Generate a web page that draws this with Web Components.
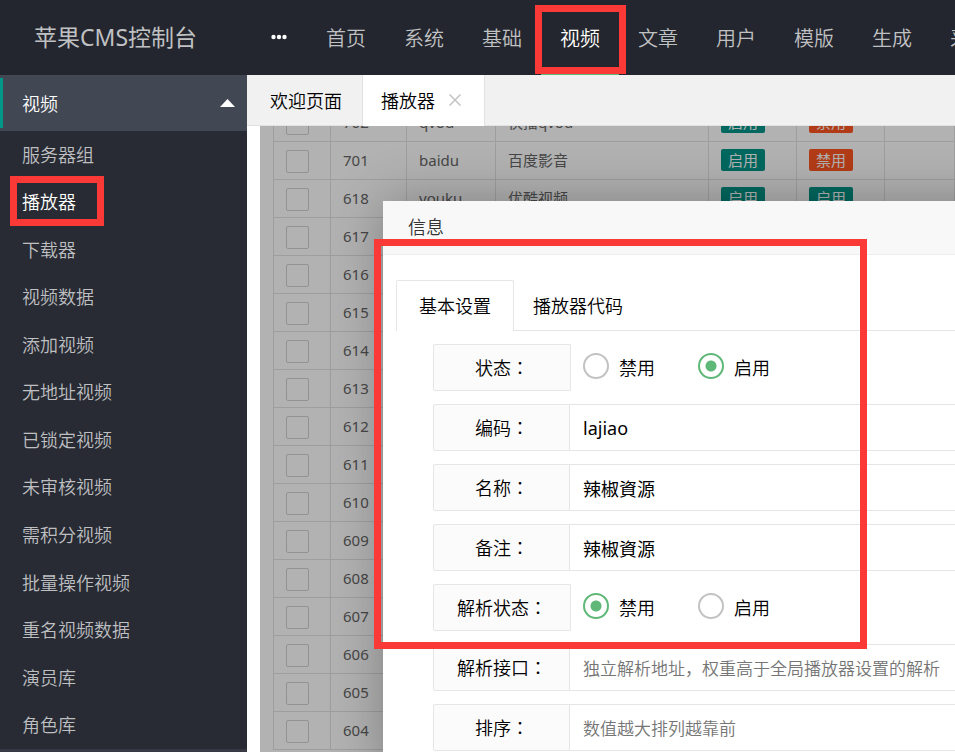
<!DOCTYPE html>
<html lang="zh-CN">
<head>
<meta charset="utf-8">
<meta name="viewport" content="width=device-width, initial-scale=1">
<title>苹果CMS控制台</title>
<style>
	body {
		margin: 0;
		font-family: 'Noto Sans', 'Noto Sans CJK SC', sans-serif;
		font-size: 18px;
		font-weight: 350;
		color: #000;
	}
</style>
</head>
<body>
<cms-app></cms-app>

<script>
class CmsHeader extends HTMLElement {
	constructor() {
		super()
		this.attachShadow({ mode: 'open' })
	}

	static get styles() {
		return /* css */ `
    :host {
      display: flex;
      flex: none;
      height: 75px;
      overflow: hidden;
      background: #23262e;
      color: #c0c1c3;
      white-space: nowrap;
    }
    .logo {
      flex: none;
      box-sizing: border-box;
      width: 247px;
      padding-left: 34px;
      font-size: 23px;
      font-weight: 400;
      line-height: 75px;
    }
    button {
      flex: none;
      display: flex;
      align-items: center;
      width: 60px;
      padding: 0 0 2px 24px;
      border: 0;
      background: none;
    }
    nav { display: flex; }
    a {
      box-sizing: border-box;
      height: 75px;
      padding: 0 19px;
      font-size: 20px;
      line-height: 77px;
      color: inherit;
      text-decoration: none;
    }
    a.active {
      color: #fff;
      border-bottom: 5px solid #5fb878;
    }
    `
	}

	connectedCallback() {
		const items = ['首页', '系统', '基础', '视频', '文章', '用户', '模版', '生成', '采集']
		this.shadowRoot.innerHTML = /* html */ `
      <style>${CmsHeader.styles}</style>
      <div class="logo">苹果CMS控制台</div>
      <button type="button" aria-label="菜单">
        <svg width="16" height="6" viewBox="0 0 16 6" fill="#fff">
          <circle cx="2.5" cy="3" r="2.2"/><circle cx="8" cy="3" r="2.2"/><circle cx="13.5" cy="3" r="2.2"/>
        </svg>
      </button>
      <nav>${items.map(t => `<a href="#"${t === '视频' ? ' class="active"' : ''}>${t}</a>`).join('')}</nav>
    `
	}
}

class CmsSide extends HTMLElement {
	constructor() {
		super()
		this.attachShadow({ mode: 'open' })
	}

	static get styles() {
		return /* css */ `
    :host {
      display: flex;
      flex-direction: column;
      flex: none;
      box-sizing: border-box;
      width: 247px;
      background: #282b33;
      border-bottom: 3px solid #373945;
      color: #bebfc1;
    }
    .group {
      position: relative;
      display: flex;
      align-items: center;
      justify-content: space-between;
      flex: none;
      height: 56px;
      padding: 0 12px 0 22px;
      border: 0;
      background: #424754;
      color: #fff;
      font: inherit;
    }
    .group::before {
      content: '';
      position: absolute;
      left: 0;
      top: 3px;
      bottom: 3px;
      width: 3px;
      background: #009688;
    }
    nav {
      display: flex;
      flex-direction: column;
      flex: 1;
    }
    a {
      display: flex;
      align-items: center;
      flex: 1;
      padding: 0 0 2px 22px;
      color: inherit;
      text-decoration: none;
    }
    a.active { color: #fff; }
    `
	}

	connectedCallback() {
		const items = ['服务器组', '播放器', '下载器', '视频数据', '添加视频', '无地址视频', '已锁定视频',
			'未审核视频', '需积分视频', '批量操作视频', '重名视频数据', '演员库', '角色库']
		this.shadowRoot.innerHTML = /* html */ `
      <style>${CmsSide.styles}</style>
      <button type="button" class="group">视频
        <svg width="15" height="8" viewBox="0 0 15 8"><path d="M7.5 0L15 8H0Z" fill="#fff"/></svg>
      </button>
      <nav>${items.map(t => `<a href="#"${t === '播放器' ? ' class="active"' : ''}>${t}</a>`).join('')}</nav>
    `
	}
}

class CmsTabs extends HTMLElement {
	constructor() {
		super()
		this.attachShadow({ mode: 'open' })
	}

	static get styles() {
		return /* css */ `
    :host {
      display: flex;
      flex: none;
      box-sizing: border-box;
      height: 51px;
      background: #f1f1f1;
      border-bottom: 1px solid #e2e2e2;
    }
    .tab {
      display: flex;
      align-items: center;
      box-sizing: border-box;
      height: 50px;
      padding: 0 20px 0 23px;
      border-right: 1px solid #e2e2e2;
    }
    .tab.active {
      gap: 14px;
      height: 51px;
      padding: 0 23px 1px 18px;
      background: #fff;
    }
    a {
      color: inherit;
      text-decoration: none;
    }
    button {
      display: flex;
      padding: 0;
      border: 0;
      background: none;
    }
    `
	}

	connectedCallback() {
		this.shadowRoot.innerHTML = /* html */ `
      <style>${CmsTabs.styles}</style>
      <div class="tab"><a href="#">欢迎页面</a></div>
      <div class="tab active">
        <a href="#">播放器</a>
        <button type="button" aria-label="关闭">
          <svg width="12" height="12" viewBox="0 0 12 12" stroke="#c2c2c2" stroke-width="1.5"><path d="M.5 .5L11.5 11.5M11.5 .5L.5 11.5"/></svg>
        </button>
      </div>
    `
	}
}

class PlayerTable extends HTMLElement {
	constructor() {
		super()
		this.attachShadow({ mode: 'open' })
	}

	static get styles() {
		return /* css */ `
    :host {
      display: block;
      padding-left: 13px;
      background: #fff;
    }
    /* the list is scrolled a little past its first row */
    table {
      width: 100%;
      margin-top: -22px;
      table-layout: fixed;
      border-spacing: 0;
      border-left: 1px solid #e2e2e2;
      font-size: 15px;
      font-weight: 400;
      color: #666;
    }
    td {
      box-sizing: border-box;
      height: 38px;
      padding: 0 12px 2px;
      border-right: 1px solid #e2e2e2;
      border-bottom: 1px solid #e2e2e2;
      line-height: 22px;
      white-space: nowrap;
    }
    td:first-child { padding: 2px 12px 0; }
    .check { width: 57px; }
    .id { width: 76px; }
    .code { width: 89px; }
    .name { width: 213px; }
    .state { width: 88px; }
    input {
      display: block;
      appearance: none;
      box-sizing: border-box;
      width: 23px;
      height: 23px;
      margin: 0;
      border: 1px solid #d2d2d2;
      border-radius: 2px;
      background: #fff;
    }
    button {
      display: block;
      height: 22px;
      padding: 0 7px;
      border: 0;
      border-radius: 2px;
      background: #009688;
      color: #fff;
      font: inherit;
      line-height: 22px;
    }
    button.off { background: #ff5722; }
    `
	}

	row([id, code = '', name = '', status = '', parse = '']) {
		const badge = t => t && `<button type="button"${t === '禁用' ? ' class="off"' : ''}>${t}</button>`
		return /* html */ `
      <tr>
        <td><input type="checkbox" aria-label="${id}"></td>
        <td>${id}</td><td>${code}</td><td>${name}</td>
        <td>${badge(status)}</td><td>${badge(parse)}</td><td></td>
      </tr>`
	}

	connectedCallback() {
		const rows = [
			[702, 'qvod', '快播qvod', '启用', '禁用'],
			[701, 'baidu', '百度影音', '启用', '禁用'],
			[618, 'youku', '优酷视频', '启用', '启用']
		]
		for (let id = 617; id > 603; id--) {
			rows.push([id])
		}
		this.shadowRoot.innerHTML = /* html */ `
      <style>${PlayerTable.styles}</style>
      <table>
        <colgroup>
          <col class="check"><col class="id"><col class="code"><col class="name"><col class="state"><col class="state"><col>
        </colgroup>
        <tbody>${rows.map(r => this.row(r)).join('')}</tbody>
      </table>
    `
	}
}

class FormRow extends HTMLElement {
	constructor() {
		super()
		this.attachShadow({ mode: 'open' })
	}

	static get styles() {
		return /* css */ `
    :host {
      display: flex;
      height: 47px;
    }
    .label {
      flex: none;
      display: flex;
      align-items: center;
      justify-content: center;
      box-sizing: border-box;
      width: 138px;
      padding-bottom: 2px;
      border: 1px solid #e6e6e6;
      border-radius: 2px 0 0 2px;
      background: #fbfbfb;
    }
    /* the colon sits in the middle of its square */
    .colon { font-family: 'Noto Sans CJK TC', sans-serif; }
    .text {
      flex: 1;
      min-width: 0;
      box-sizing: border-box;
      margin: 0 0 0 -2px;
      padding: 0 13px;
      border: 1px solid #e6e6e6;
      border-radius: 0 2px 2px 0;
      background: #fff;
      color: #000;
      font: inherit;
      font-weight: 400;
    }
    .text::placeholder {
      color: #757575;
      font-size: 17px;
      font-weight: 350;
    }
    .choices {
      display: flex;
      align-items: center;
      gap: 43px;
      padding: 0 0 2px 12px;
    }
    .choices label {
      display: flex;
      align-items: center;
      gap: 10px;
    }
    .choices input {
      appearance: none;
      box-sizing: border-box;
      width: 26px;
      height: 26px;
      margin: 0 0 2px;
      border: 2px solid #c2c2c2;
      border-radius: 50%;
    }
    .choices input:checked {
      border-color: #5fb878;
      background: radial-gradient(circle, #5fb878 5px, transparent 6px);
    }
    `
	}

	connectedCallback() {
		const label = this.getAttribute('label') + '<span class="colon" lang="zh-TW">：</span>'
		const value = this.getAttribute('value') || ''
		let body
		if (this.hasAttribute('radio')) {
			const radio = t => `<label><input type="radio" name="r"${t === value ? ' checked' : ''}>${t}</label>`
			body = /* html */ `
        <span class="label" id="l">${label}</span>
        <div class="choices" role="radiogroup" aria-labelledby="l">${radio('禁用')}${radio('启用')}</div>`
		} else {
			body = /* html */ `
        <label class="label" for="f">${label}</label>
        <input class="text" id="f" type="text" value="${value}" placeholder="${this.getAttribute('placeholder') || ''}">`
		}
		this.shadowRoot.innerHTML = `<style>${FormRow.styles}</style>${body}`
	}
}

class InfoDialog extends HTMLElement {
	constructor() {
		super()
		this.attachShadow({ mode: 'open' })
	}

	static get styles() {
		return /* css */ `
    :host {
      display: block;
      background: #fff;
      box-shadow: 1px 1px 50px rgba(0, 0, 0, .3);
      white-space: nowrap;
    }
    header {
      box-sizing: border-box;
      height: 54px;
      padding-left: 25px;
      border-bottom: 1px solid #eee;
      background: #f8f8f8;
      color: #333;
      line-height: 53px;
    }
    .tabs {
      display: flex;
      height: 51px;
      margin: 25px 0 0 13px;
    }
    .tabs::after {
      content: '';
      flex: 1;
      border-bottom: 1px solid #e6e6e6;
    }
    button {
      padding: 0 19px;
      border: 0;
      border-bottom: 1px solid #e6e6e6;
      background: none;
      color: #000;
      font: inherit;
    }
    button.active {
      padding: 0 22px 2px;
      border: 1px solid #e6e6e6;
      border-bottom: 0;
      border-radius: 2px 2px 0 0;
    }
    form {
      display: grid;
      gap: 13px;
      padding: 13px 25px 25px 50px;
    }
    `
	}

	connectedCallback() {
		this.shadowRoot.innerHTML = /* html */ `
      <style>${InfoDialog.styles}</style>
      <header>信息</header>
      <div class="tabs">
        <button type="button" class="active">基本设置</button>
        <button type="button">播放器代码</button>
      </div>
      <form><slot></slot></form>
    `
	}
}

class MarkBox extends HTMLElement {
	constructor() {
		super()
		this.attachShadow({ mode: 'open' })
	}

	connectedCallback() {
		this.shadowRoot.innerHTML = /* html */ `
      <style>
        :host {
          position: absolute;
          z-index: 2;
          box-sizing: border-box;
          border: 7px solid #fb3a38;
          pointer-events: none;
        }
      </style>
    `
	}
}

class CmsApp extends HTMLElement {
	constructor() {
		super()
		this.attachShadow({ mode: 'open' })
	}

	static get styles() {
		return /* css */ `
    :host {
      position: relative;
      display: flex;
      flex-direction: column;
      height: 100vh;
      overflow: hidden;
    }
    .body {
      display: flex;
      flex: 1;
      min-height: 0;
    }
    main {
      display: flex;
      flex-direction: column;
      flex: 1;
      min-width: 0;
      background: #fff;
    }
    .frame {
      position: relative;
      flex: 1;
      min-height: 0;
      margin-left: 13px;
      overflow: hidden;
    }
    .shade {
      position: absolute;
      inset: 0;
      background: rgba(0, 0, 0, .3);
    }
    info-dialog {
      position: absolute;
      left: 123px;
      right: -60px;
      top: 75px;
    }
    .mark-nav { left: 535px; top: 5px; width: 91px; height: 69px; }
    .mark-side { left: 10px; top: 176px; width: 94px; height: 50px; }
    .mark-form { left: 374px; top: 239px; width: 493px; height: 410px; }
    `
	}

	connectedCallback() {
		this.shadowRoot.innerHTML = /* html */ `
      <style>${CmsApp.styles}</style>
      <cms-header></cms-header>
      <div class="body">
        <cms-side></cms-side>
        <main>
          <cms-tabs></cms-tabs>
          <div class="frame">
            <player-table></player-table>
            <div class="shade"></div>
            <info-dialog>
              <form-row radio label="状态" value="启用"></form-row>
              <form-row label="编码" value="lajiao"></form-row>
              <form-row label="名称" value="辣椒資源"></form-row>
              <form-row label="备注" value="辣椒資源"></form-row>
              <form-row radio label="解析状态" value="禁用"></form-row>
              <form-row label="解析接口" placeholder="独立解析地址，权重高于全局播放器设置的解析"></form-row>
              <form-row label="排序" placeholder="数值越大排列越靠前"></form-row>
            </info-dialog>
          </div>
        </main>
      </div>
      <mark-box class="mark-nav"></mark-box>
      <mark-box class="mark-side"></mark-box>
      <mark-box class="mark-form"></mark-box>
    `
	}
}

customElements.define('cms-header', CmsHeader)
customElements.define('cms-side', CmsSide)
customElements.define('cms-tabs', CmsTabs)
customElements.define('player-table', PlayerTable)
customElements.define('form-row', FormRow)
customElements.define('info-dialog', InfoDialog)
customElements.define('mark-box', MarkBox)
customElements.define('cms-app', CmsApp)
</script>
</body>
</html>
